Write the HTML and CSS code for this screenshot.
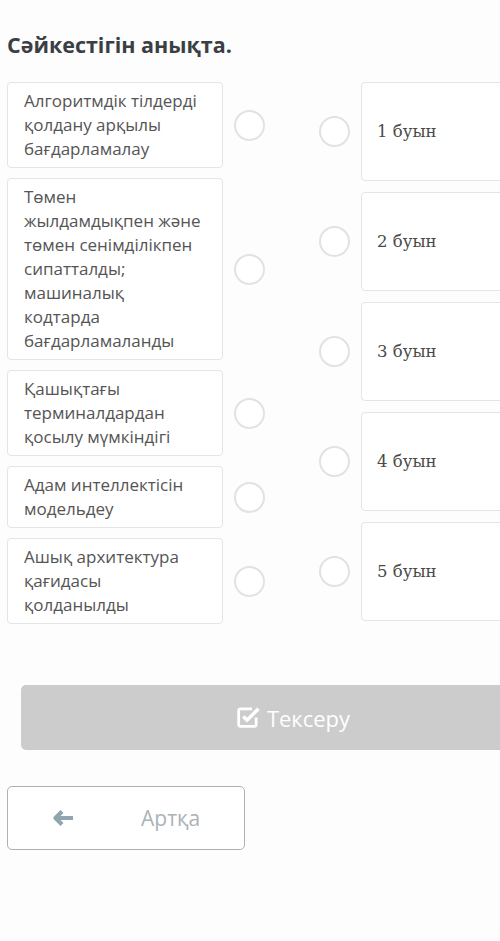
FILE: index.html
```html
<!DOCTYPE html>
<html lang="kk">
<head>
	<meta charset="UTF-8">
	<meta name="viewport" content="width=device-width, initial-scale=1.0">
	<title>Сәйкестігін анықта</title>
	<link rel="stylesheet" href="styles.css">
</head>
<body>
	<h1 class="title">Сәйкестігін анықта.</h1>

	<div class="match">
		<!-- сол жақ: сұрақтар -->
		<div class="col-left">
			<div class="row">
				<div class="card">Алгоритмдік тілдерді қолдану арқылы бағдарламалау</div>
				<span class="dot"></span>
			</div>
			<div class="row">
				<div class="card">Төмен жылдамдықпен және төмен сенімділікпен сипатталды; машиналық кодтарда бағдарламаланды</div>
				<span class="dot"></span>
			</div>
			<div class="row">
				<div class="card">Қашықтағы терминалдардан қосылу мүмкіндігі</div>
				<span class="dot"></span>
			</div>
			<div class="row">
				<div class="card">Адам интеллектісін модельдеу</div>
				<span class="dot"></span>
			</div>
			<div class="row">
				<div class="card">Ашық архитектура қағидасы қолданылды</div>
				<span class="dot"></span>
			</div>
		</div>

		<!-- оң жақ: жауаптар -->
		<div class="col-right">
			<div class="row">
				<span class="dot"></span>
				<div class="answer">1 буын</div>
			</div>
			<div class="row">
				<span class="dot"></span>
				<div class="answer">2 буын</div>
			</div>
			<div class="row">
				<span class="dot"></span>
				<div class="answer">3 буын</div>
			</div>
			<div class="row">
				<span class="dot"></span>
				<div class="answer">4 буын</div>
			</div>
			<div class="row">
				<span class="dot"></span>
				<div class="answer">5 буын</div>
			</div>
		</div>
	</div>

	<button class="btn-check" type="button">
		<svg class="ico-check" viewBox="0 0 24 24" width="28" height="28">
			<path d="M19 12.5V18.5a1.5 1.5 0 0 1-1.5 1.5h-12A1.5 1.5 0 0 1 4 18.5v-12A1.5 1.5 0 0 1 5.5 5h10" fill="none" stroke="#fff" stroke-width="2.4"/>
			<path d="M8 11.5l3.2 3.2L21 5" fill="none" stroke="#fff" stroke-width="3"/>
		</svg>
		Тексеру
	</button>

	<button class="btn-back" type="button">
		<svg class="ico-arrow" viewBox="0 0 22 16" width="22" height="16">
			<path d="M9 1.5L2.5 8L9 14.5M3 8h17" fill="none" stroke="#8fa5af" stroke-width="4.2" stroke-linejoin="round"/>
		</svg>
		<span>Артқа</span>
	</button>
</body>
</html>
```

FILE: styles.css
```css
* {
	margin: 0;
	padding: 0;
	box-sizing: border-box;
}

body {
	background: #fdfdfd;
	font-family: "Open Sans", "Noto Sans", sans-serif;
	color: #555;
	padding: 32px 0 0 7px;
	overflow: hidden;
	width: 500px;
	height: 941px;
}

.title {
	font-size: 21.5px;
	line-height: 25px;
	font-weight: 700;
	color: #3b3f44;
	margin-bottom: 25px;
}

.match {
	display: flex;
	gap: 54px;
	align-items: flex-start;
}

.col-left {
	display: flex;
	flex-direction: column;
	gap: 10px;
}

.col-right {
	display: flex;
	flex-direction: column;
	gap: 11px;
}

.row {
	display: flex;
	align-items: center;
	gap: 11px;
}

.card {
	width: 216px;
	padding: 6px 20px 6px 16px;
	border: 1px solid #e4e4e4;
	border-radius: 4px;
	background: #fff;
	font-size: 17px;
	line-height: 24px;
	color: #555;
}

.dot {
	flex: none;
	width: 31px;
	height: 31px;
	border: 2.5px solid #e2e2e2;
	border-radius: 50%;
	background: #fff;
}

.answer {
	width: 200px;
	height: 99px;
	display: flex;
	align-items: center;
	padding-left: 15px;
	border: 1px solid #e4e4e4;
	border-radius: 4px;
	background: #fff;
	font-family: "DejaVu Serif", "Liberation Serif", serif;
	font-size: 16.5px;
	color: #4a4a4a;
}

.btn-check {
	margin: 61px 0 0 14px;
	width: 542px;
	height: 65px;
	border: none;
	border-radius: 5px;
	background: #cccccc;
	color: #fff;
	font-family: "Open Sans", "Noto Sans", sans-serif;
	font-size: 22px;
	display: flex;
	align-items: center;
	justify-content: center;
	gap: 5px;
}

.ico-check {
	margin-top: -2px;
}

.btn-back {
	margin-top: 36px;
	width: 238px;
	height: 64px;
	border: 1.5px solid #a9b3b6;
	border-radius: 5px;
	background: #fff;
	color: #aab3b7;
	font-family: "Open Sans", "Noto Sans", sans-serif;
	font-size: 21px;
	display: flex;
	align-items: center;
	padding-left: 45px;
}

.ico-arrow {
	margin-right: 66px;
}
```
